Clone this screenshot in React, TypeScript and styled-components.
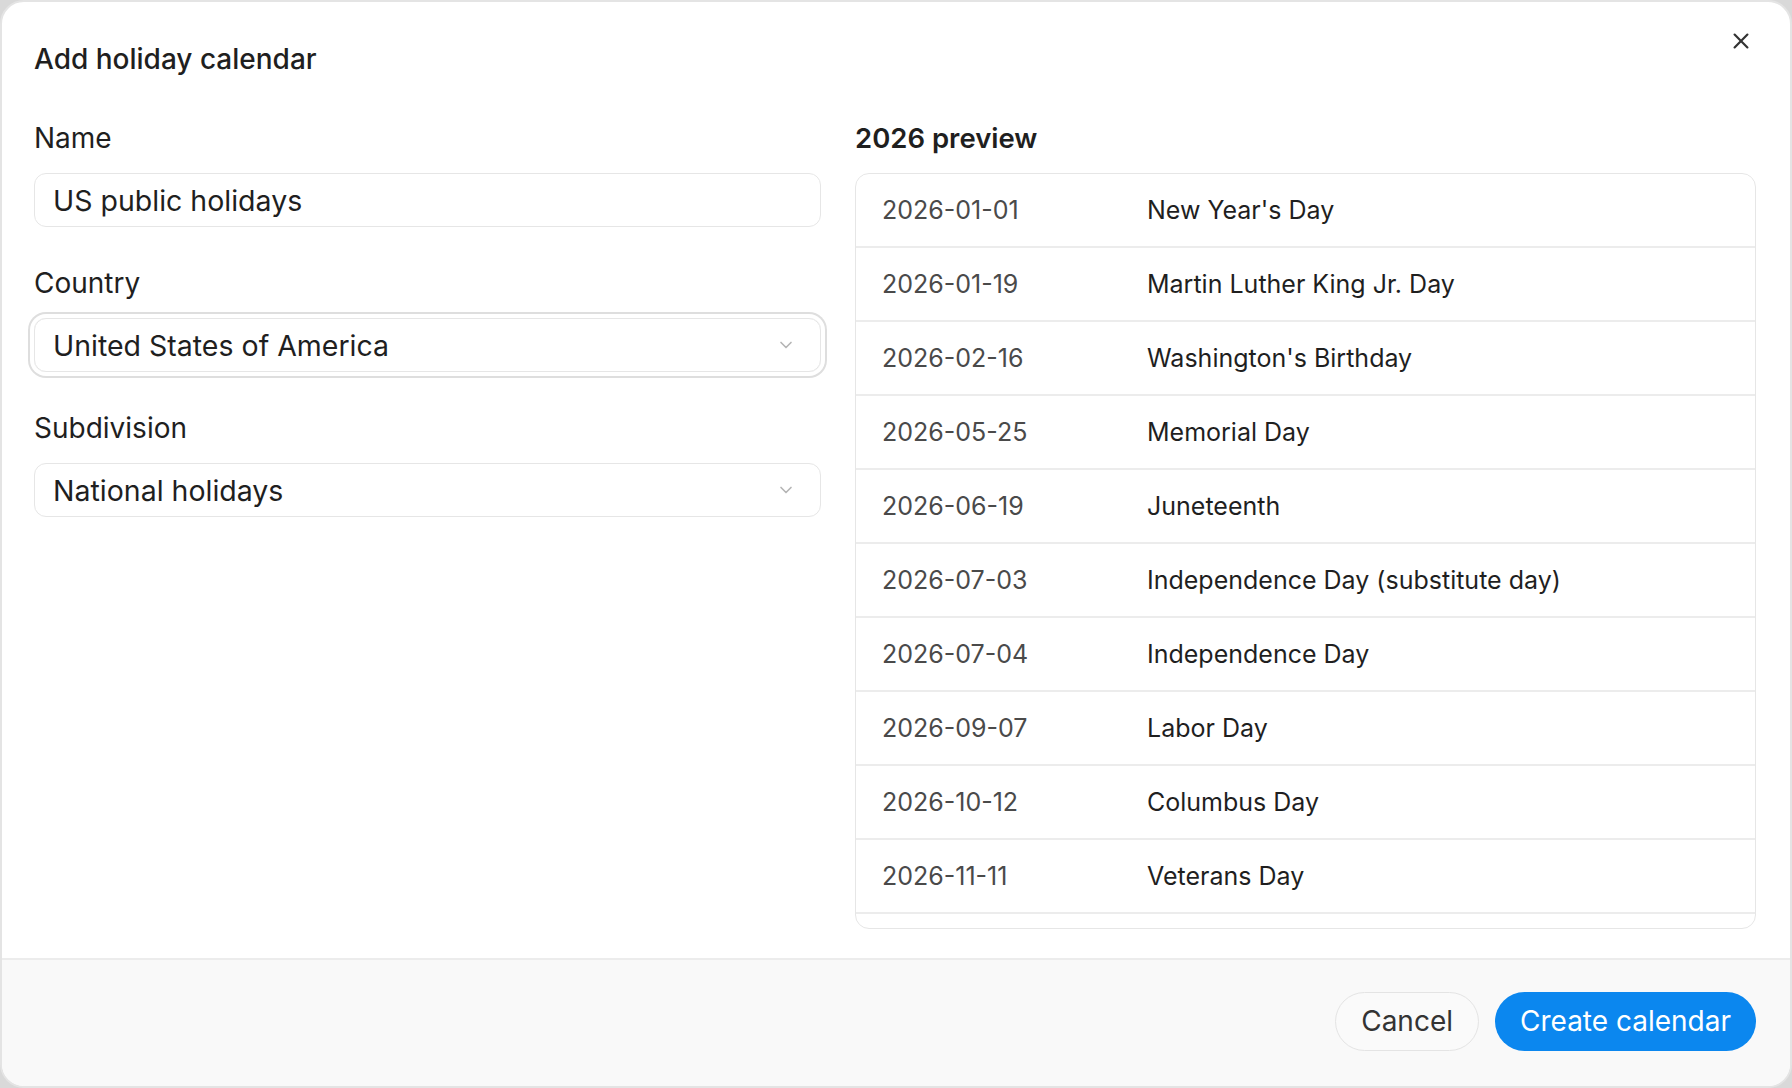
import React from 'react';
import styled, {createGlobalStyle} from 'styled-components';

const Global = createGlobalStyle`
    html, body { margin: 0; height: 100%; background: #d9d9d9; }
    body { font-family: Inter, "Noto Sans", sans-serif; color: #1f1f1f; }
    #root { height: 100%; }
`;

const Dialog = styled.div`
    height: 1088px;
    box-sizing: border-box;
    background: #fff;
    border: 2px solid #e4e4e4;
    border-radius: 24px;
    display: flex;
    flex-direction: column;
    overflow: hidden;
    position: relative;
`;

const Close = styled.button`
    position: absolute;
    top: 24px;
    right: 34px;
    width: 30px;
    height: 30px;
    border: 0;
    background: none;
    padding: 0;
    display: flex;
    align-items: center;
    justify-content: center;
    color: #333;
`;

const Body = styled.div`
    flex: 1;
    padding: 40px 34px 0 32px;
`;

const Title = styled.div`
    font-size: 28px;
    font-weight: 500;
    margin-bottom: 40px;
`;

const Columns = styled.div`
    display: grid;
    grid-template-columns: 787px 1fr;
    gap: 34px;
`;

const Column = styled.div`
    display: flex;
    flex-direction: column;
`;

const Label = styled.div<{$bold?: boolean}>`
    font-size: ${p => (p.$bold ? 27.5 : 28)}px;
    font-weight: ${p => (p.$bold ? 600 : 400)};
    margin-top: 7px;
    height: 50px;
    line-height: 30px;
`;

const Field = styled.div<{$focused?: boolean}>`
    height: 54px;
    box-sizing: border-box;
    border: 1.5px solid #e6e6e6;
    border-radius: 12px;
    display: flex;
    align-items: center;
    padding: 0 24px 0 18px;
    font-size: 28.5px;
    margin-bottom: 34px;
    box-shadow: ${p => (p.$focused ? '0 0 0 4px #fff, 0 0 0 6px #dedede' : 'none')};
    svg { margin-left: auto; color: #b5b5b5; }
`;

const Table = styled.div`
    border: 1.5px solid #e6e6e6;
    border-radius: 14px;
    height: 756px;
    box-sizing: border-box;
    overflow: hidden;
`;

const Row = styled.div`
    height: 74px;
    box-sizing: border-box;
    border-bottom: 2px solid #ececec;
    display: grid;
    grid-template-columns: 265px 1fr;
    align-items: center;
    padding-left: 26px;
    font-size: 25px;
`;

const DateCell = styled.div`
    color: #4a4a4a;
`;

const Footer = styled.div`
    height: 122px;
    border-top: 2px solid #ececec;
    background: #f9f9f9;
    display: flex;
    justify-content: flex-end;
    align-items: center;
    gap: 16px;
    padding: 0 34px 4px;
`;

const Button = styled.button<{$primary?: boolean}>`
    height: 59px;
    border-radius: 30px;
    padding: 0 25px;
    font-family: inherit;
    font-size: 28px;
    border: ${p => (p.$primary ? '0' : '1.5px solid #e4e4e4')};
    background: ${p => (p.$primary ? '#0b87ef' : '#fafafa')};
    color: ${p => (p.$primary ? '#fff' : '#333')};
`;

const Chevron = () => (
    <svg width="20" height="20" viewBox="0 0 24 24" fill="none" stroke="currentColor" strokeWidth="2" strokeLinecap="round" strokeLinejoin="round">
        <path d="M6 9l6 6 6-6" />
    </svg>
);

const holidays = [
    ['2026-01-01', "New Year's Day"],
    ['2026-01-19', 'Martin Luther King Jr. Day'],
    ['2026-02-16', "Washington's Birthday"],
    ['2026-05-25', 'Memorial Day'],
    ['2026-06-19', 'Juneteenth'],
    ['2026-07-03', 'Independence Day (substitute day)'],
    ['2026-07-04', 'Independence Day'],
    ['2026-09-07', 'Labor Day'],
    ['2026-10-12', 'Columbus Day'],
    ['2026-11-11', 'Veterans Day'],
    ['2026-11-26', 'Thanksgiving Day'],
    ['2026-12-25', 'Christmas Day'],
];

export default function App() {
    return (
        <>
            <Global />
            <Dialog>
                <Close>
                    <svg width="22" height="22" viewBox="0 0 24 24" fill="none" stroke="currentColor" strokeWidth="2.4" strokeLinecap="round">
                        <path d="M5 5l14 14M19 5L5 19" />
                    </svg>
                </Close>
                <Body>
                    <Title>Add holiday calendar</Title>
                    <Columns>
                        <Column>
                            <Label>Name</Label>
                            <Field>US public holidays</Field>
                            <Label>Country</Label>
                            <Field $focused>United States of America<Chevron /></Field>
                            <Label>Subdivision</Label>
                            <Field>National holidays<Chevron /></Field>
                        </Column>
                        <Column>
                            <Label $bold>2026 preview</Label>
                            <Table>
                                {holidays.map(([d, n]) => (
                                    <Row key={d}>
                                        <DateCell>{d}</DateCell>
                                        <div>{n}</div>
                                    </Row>
                                ))}
                            </Table>
                        </Column>
                    </Columns>
                </Body>
                <Footer>
                    <Button>Cancel</Button>
                    <Button $primary>Create calendar</Button>
                </Footer>
            </Dialog>
        </>
    );
}
